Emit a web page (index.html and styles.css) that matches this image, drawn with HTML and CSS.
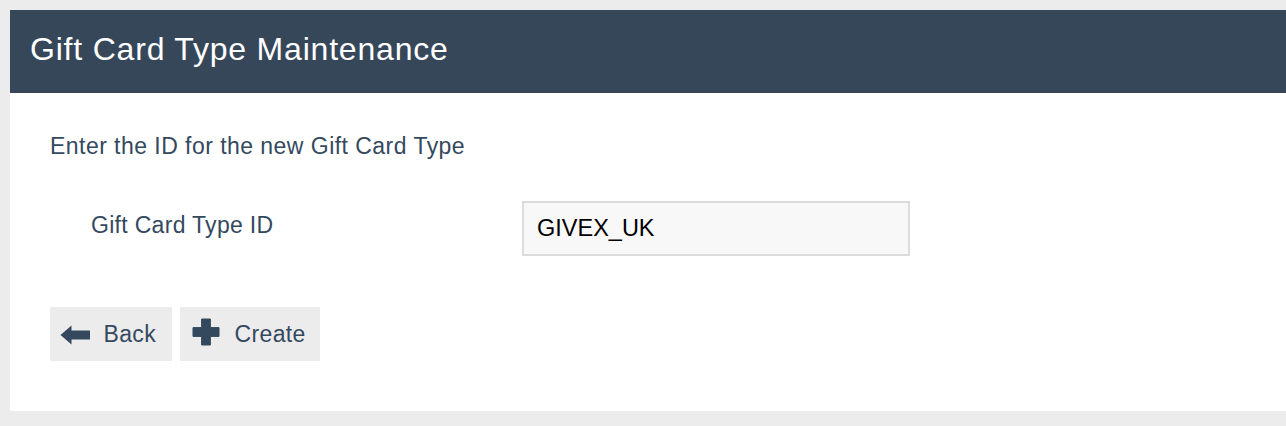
FILE: index.html
```html
<!DOCTYPE html>
<html lang="en">
<head>
<meta charset="utf-8">
<title>Gift Card Type Maintenance</title>
<link rel="stylesheet" href="styles.css">
</head>
<body>
<div class="card">
  <div class="card-header">Gift Card Type Maintenance</div>
  <div class="card-body">
    <p class="intro">Enter the ID for the new Gift Card Type</p>
    <div class="form-row">
      <label class="field-label" for="gctid">Gift Card Type ID</label>
      <input class="field-input" id="gctid" type="text" value="GIVEX_UK">
    </div>
    <div class="actions">
      <button class="btn btn-back" type="button">
        <svg class="icon-arrow" width="30" height="20" viewBox="0 0 30 20" aria-hidden="true">
          <polygon points="0.5,10 11.5,0.6 11.5,5.5 30,5.5 30,14.5 11.5,14.5 11.5,19.4" fill="#34495e"/>
        </svg>
        <span>Back</span>
      </button>
      <button class="btn btn-create" type="button">
        <svg class="icon-plus" width="28" height="28" viewBox="0 0 28 28" aria-hidden="true">
          <path d="M9.6 1 H18.4 V9.6 H27 V18.4 H18.4 V27 H9.6 V18.4 H1 V9.6 H9.6 Z" fill="#34495e" stroke="#34495e" stroke-width="1" stroke-linejoin="round"/>
        </svg>
        <span>Create</span>
      </button>
    </div>
  </div>
</div>
</body>
</html>
```
FILE: styles.css
```css
html, body {
  background: #ececec;
}
body {
  margin: 10px 0 15px 10px;
  font-family: "Liberation Sans", Arial, Helvetica, sans-serif;
  color: #34495e;
}
.card {
  background: #ffffff;
}
.card-header {
  background: #37475a;
  color: #ffffff;
  font-size: 32px;
  letter-spacing: 0.8px;
  line-height: 36px;
  padding: 21px 20px 26px;
}
.card-body {
  padding: 40px 40px 50px;
}
.intro {
  margin: 0;
  font-size: 23px;
  line-height: 26px;
  letter-spacing: 0.46px;
}
.form-row {
  margin-top: 42px;
  display: grid;
  grid-template-columns: 472px 388px;
  align-items: start;
}
.field-label {
  padding: 11px 0 0 41px;
  font-size: 23px;
  line-height: 26px;
  letter-spacing: 0.3px;
}
.field-input {
  box-sizing: border-box;
  width: 388px;
  height: 55px;
  margin: 0;
  border: 2px solid #dcdcdc;
  border-radius: 0;
  background: #f8f8f8;
  padding: 0 13px;
  font-family: "Liberation Sans", Arial, sans-serif;
  font-size: 23.5px;
  color: #000000;
  outline: none;
}
.actions {
  margin-top: 51px;
  display: flex;
  gap: 8px;
}
.btn {
  display: flex;
  align-items: center;
  height: 54px;
  margin: 0;
  border: none;
  border-radius: 0;
  background: #ececec;
  color: #34495e;
  font-family: "Liberation Sans", Arial, sans-serif;
  font-size: 23px;
  line-height: 26px;
  letter-spacing: 0.35px;
  cursor: pointer;
}
.btn-back {
  padding: 0 16px 0 10px;
  gap: 13.5px;
}
.btn-create {
  padding: 0 14px 0 12px;
  gap: 14.5px;
}
.icon-arrow {
  display: block;
  margin-top: 1px;
}
.icon-plus {
  display: block;
  margin-bottom: 5px;
}
```
